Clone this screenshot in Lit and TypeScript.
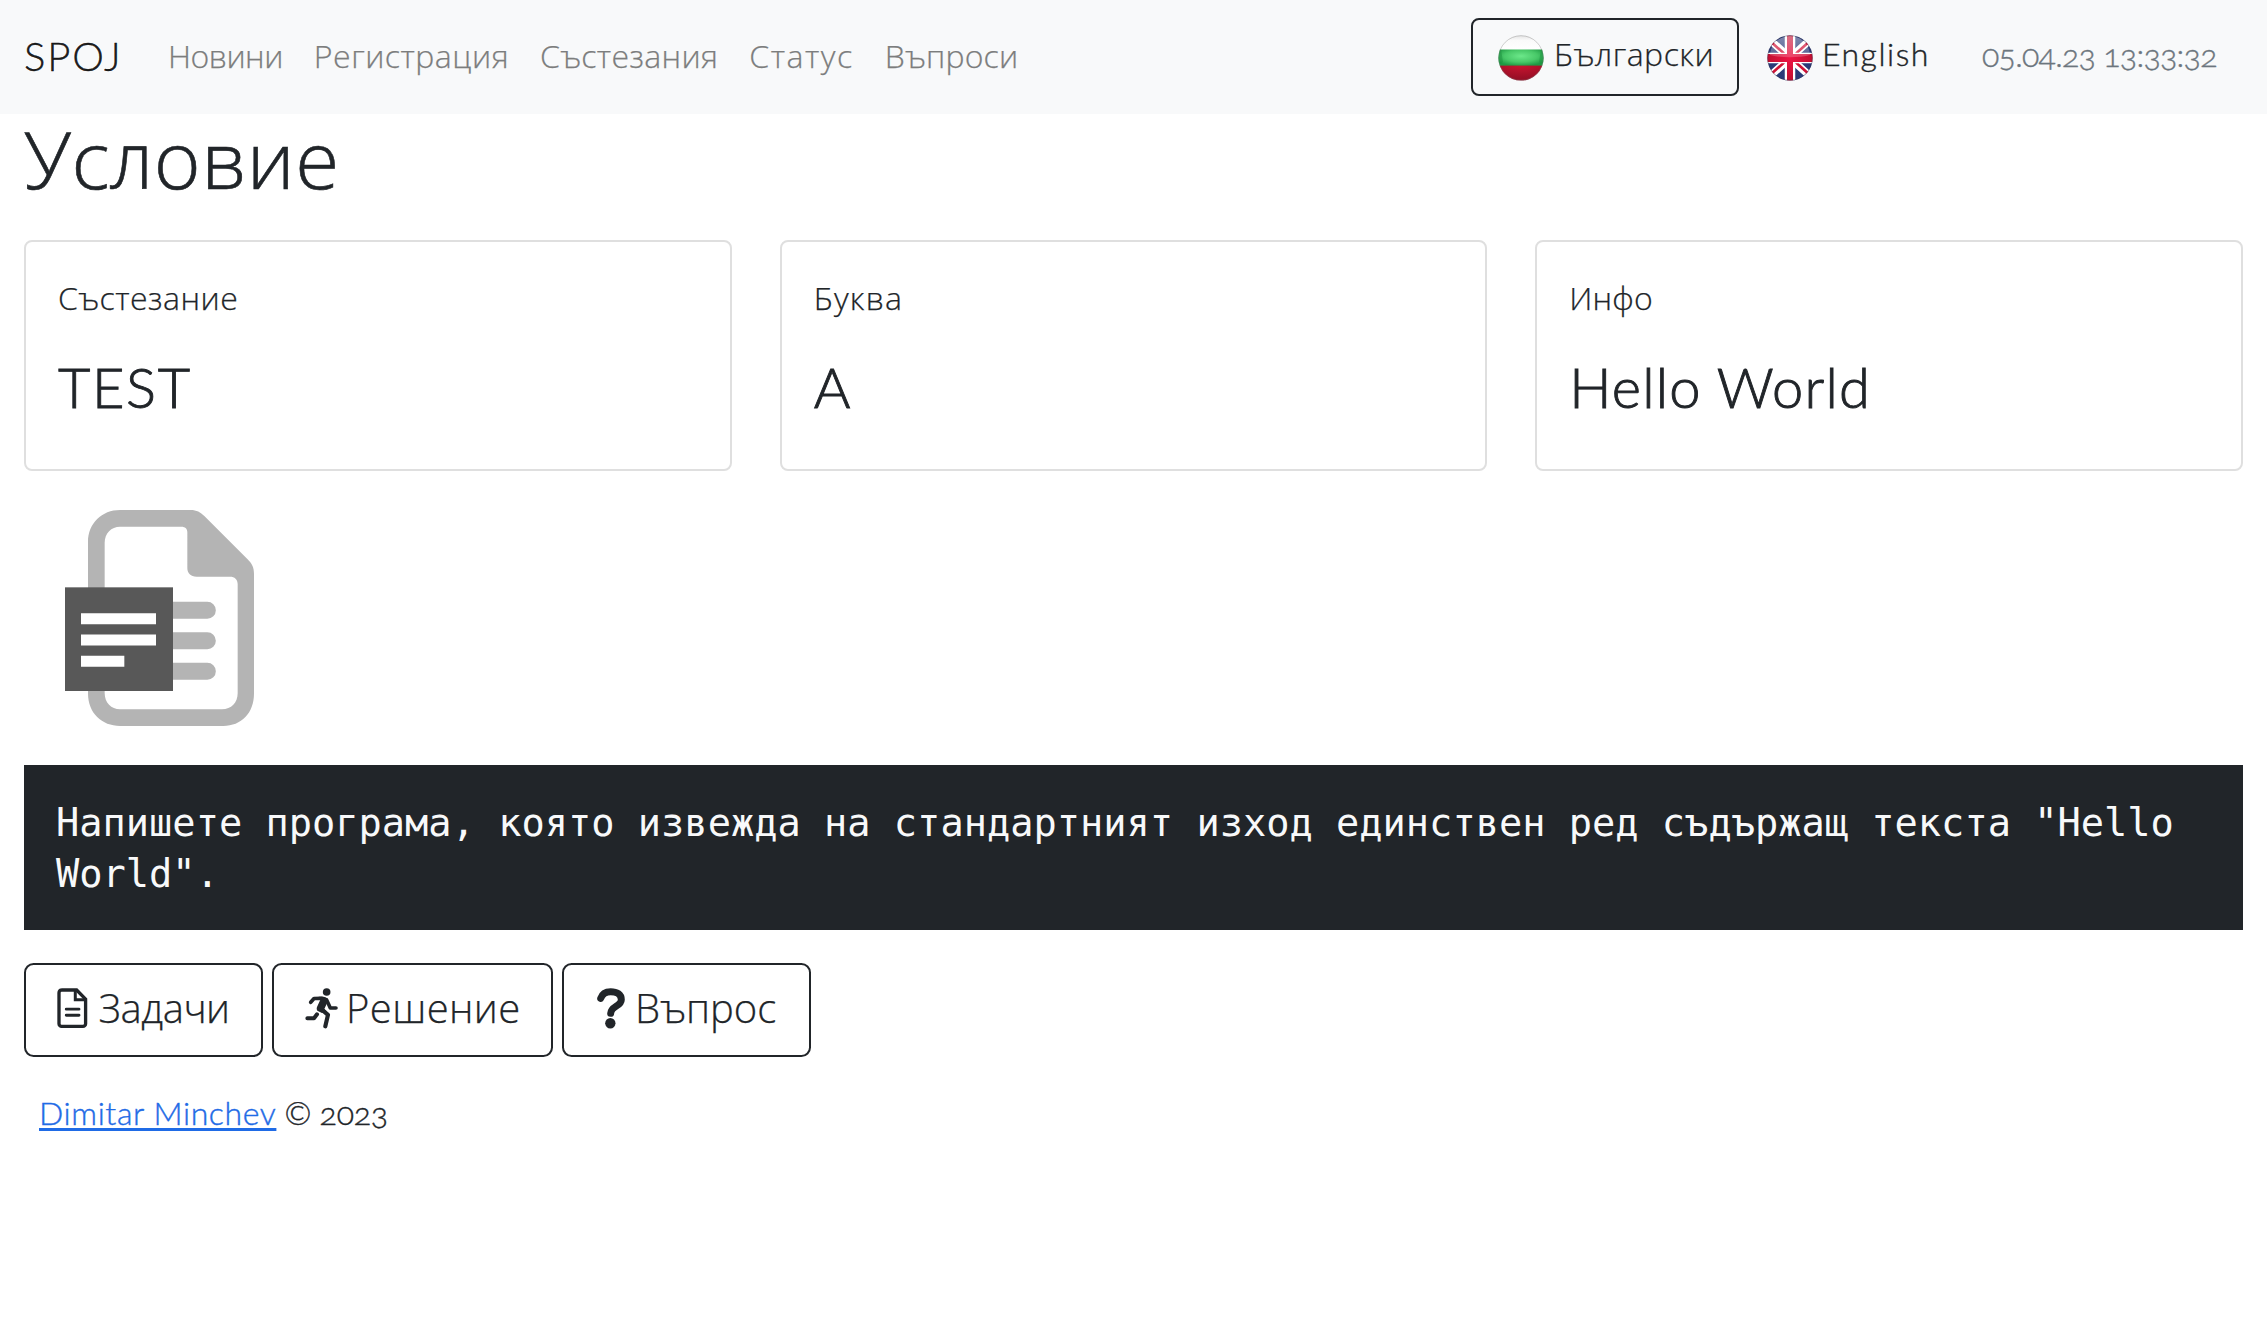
import { LitElement, html, css } from "lit";
import { customElement } from "lit/decorators.js";

const bulgarianFlag = html`<svg class="flag" viewBox="0 0 46 46" aria-hidden="true">
  <defs>
    <clipPath id="bgClip"><circle cx="23" cy="23" r="22.6" /></clipPath>
    <radialGradient id="bgGreen" cx="50%" cy="40%" r="60%">
      <stop offset="0" stop-color="#6ce88a" /><stop offset=".6" stop-color="#48c868" /><stop offset="1" stop-color="#1f9a44" />
    </radialGradient>
    <radialGradient id="bgRed" cx="50%" cy="0%" r="80%">
      <stop offset="0" stop-color="#c8142f" /><stop offset="1" stop-color="#980f26" />
    </radialGradient>
    <linearGradient id="bgWhite" x1="0" y1="0" x2="0" y2="1">
      <stop offset="0" stop-color="#e2e2e2" /><stop offset=".35" stop-color="#fafafa" /><stop offset="1" stop-color="#ffffff" />
    </linearGradient>
  </defs>
  <g clip-path="url(#bgClip)">
    <rect width="46" height="15" fill="url(#bgWhite)" />
    <rect y="14.500" width="46" height="16.500" fill="url(#bgGreen)" />
    <path d="M0 14.500h3C4 19 4 22 5 27L0 31z M46 14.500h-3c-1 4.500-1 7.500-2 12.500l5 4z" fill="#1c8f3e" opacity=".45" />
    <rect y="30.600" width="46" height="16" fill="url(#bgRed)" />
  </g>
  <circle cx="23" cy="23" r="22.300" fill="none" stroke="#777" stroke-opacity=".35" stroke-width="1" />
</svg>`;

const britishFlag = html`<svg class="flag" viewBox="0 0 46 46" aria-hidden="true">
  <defs>
    <clipPath id="ukClip"><circle cx="23" cy="23" r="22.6" /></clipPath>
    <linearGradient id="ukGloss" x1="0" y1="0" x2="0" y2="1">
      <stop offset="0" stop-color="#fff" stop-opacity=".4" /><stop offset="1" stop-color="#fff" stop-opacity=".2" />
    </linearGradient>
    <radialGradient id="ukRed" gradientUnits="userSpaceOnUse" cx="23" cy="23" r="23">
      <stop offset="0" stop-color="#ee1445" /><stop offset="1" stop-color="#c00f30" />
    </radialGradient>
  </defs>
  <g clip-path="url(#ukClip)">
    <rect width="46" height="46" fill="#2a3a78" />
    <path d="M2 4L44 42M44 4L2 42" stroke="#fff" stroke-width="7.500" />
    <path d="M2 5L22 23M44 41L24 23M44 5L24 23M2 41L22 23" stroke="#d01236" stroke-width="2.600" />
    <path d="M23 0v46M0 23h46" stroke="#fff" stroke-width="10.500" />
    <path d="M23 0v46" stroke="url(#ukRed)" stroke-width="6" />
    <rect y="19" width="46" height="8" fill="url(#ukRed)" />
    <path d="M3 20C4 7 14 1 23 1s19 6 20 19c-10 3-30 3-40 0z" fill="url(#ukGloss)" />
  </g>
  <circle cx="23" cy="23" r="22.300" fill="none" stroke="#334" stroke-opacity=".35" stroke-width="1" />
</svg>`;

const documentIcon = html`<svg class="icon doc" viewBox="51 53 92 121" aria-hidden="true">
  <path d="M64 58.500H110L137 86V160a8 8 0 0 1-8 8H65a8 8 0 0 1-8-8V66.500a8 8 0 0 1 8-8z" fill="none" stroke="#212529" stroke-width="10" />
  <path d="M106 60V88H136" fill="none" stroke="#212529" stroke-width="9" />
  <path d="M79 116H117M79 134.500H117" stroke="#212529" stroke-width="9" stroke-linecap="round" />
</svg>`;

const runnerIcon = html`<svg class="icon run" viewBox="43 38 99 122" aria-hidden="true">
  <circle cx="108" cy="50" r="11.500" fill="#212529" />
  <g fill="none" stroke="#212529" stroke-linecap="round" stroke-linejoin="round">
    <path d="M60 81L70 69.500L94 69" stroke-width="11" />
    <path d="M108 74L119 98H136" stroke-width="11" />
    <path d="M91 101L112 118.500L104 153" stroke-width="12.500" />
    <path d="M50 129H70L79 117" stroke-width="12" />
  </g>
  <path d="M84 64H98C108 65 114 72 111 79L101 101L108 108L94 113L80 106C77 102 78 97 80 93L89 73z" fill="#212529" />
</svg>`;

const questionIcon = html`<svg class="icon ask" viewBox="921 38 84 122" aria-hidden="true">
  <path d="M932 69C937 54 948 49 962 49C981 49 994 57 994 73C994 93 963 92 962 114" fill="none" stroke="#212529" stroke-width="21" stroke-linecap="round" />
  <circle cx="961" cy="144" r="15.500" fill="#212529" />
</svg>`;

const statementIcon = html`<svg class="statement-icon" viewBox="0 -27 840 882" role="img">
  <path fill="#b4b4b4" fill-rule="evenodd" d="M300 90H512C530 90 541 97 553 108L682 237C696 251 702 262 702 282V640C702 700 664 738 610 738H300C246 738 204 700 204 640V186C204 130 246 90 300 90zM300 140C274 140 254 160 254 188V640C254 668 274 688 300 688H606C634 688 653 668 653 640V312C653 298 644 290 630 290H530C512 290 502 280 502 264V158C502 146 496 140 484 140z" />
  <path d="M440 390.500H562M440 482H562M440 573.500H562" stroke="#b4b4b4" stroke-width="51" stroke-linecap="round" />
  <rect x="135" y="322" width="324" height="311" fill="#585858" />
  <path fill="#fff" d="M183 400h225v33H183zM183 463.500h225v33H183zM183 527.500h130v32.500H183z" />
</svg>`;

@customElement("app-root")
export class AppRoot extends LitElement {
  static styles = css`
    :host {
      display: block;
      min-height: 1321px;
      background: #fff;
      color: #212529;
      font-family: "Open Sans", sans-serif;
      font-size: 32px;
      font-weight: 300;
      line-height: 48px;
      white-space: nowrap;
      -webkit-text-stroke: 0.25px currentColor;
    }
    * { box-sizing: border-box; }
    a { color: inherit; text-decoration: none; }
    svg { display: block; flex: none; overflow: visible; }
    .latin { font-family: Lato, sans-serif; -webkit-text-stroke: 0.4px currentColor; }
    .navbar { display: flex; align-items: center; height: 114px; padding: 0 49px 0 24px; background: #f8f9fa; }
    .brand { font-size: 40px; letter-spacing: 1.9px; margin-right: 45.4px; padding-bottom: 2px; color: rgba(0, 0, 0, 0.9); }
    .links { display: flex; gap: 31px; padding-bottom: 3px; color: #7c7d7d; }
    .novini { letter-spacing: -0.5px; }
    .registracia { letter-spacing: 0.5px; }
    .sastezania { letter-spacing: 0.35px; }
    .status { letter-spacing: 1.55px; }
    .vaprosi { letter-spacing: 0.2px; }
    .tools { display: flex; align-items: center; margin-left: auto; }
    .lang { display: flex; align-items: center; height: 78px; padding: 0 25px; border: 2px solid transparent; border-radius: 8px; }
    .lang span { padding: 0 0 7px 10px; letter-spacing: 0.5px; }
    .lang span.latin { padding-left: 9px; letter-spacing: 1.5px; }
    .lang.current { width: 268px; border-color: #212529; }
    .lang.other { width: 242px; margin-left: 1px; }
    .flag { width: 46px; height: 46px; margin-top: 2px; }
    .clock { width: 236px; padding-bottom: 5px; color: #6c757d; letter-spacing: -0.68px; }
    .clock, .copy { font-feature-settings: "onum"; }
    main { display: flex; flex-direction: column; padding: 0 24px; }
    h1 { margin: 0 0 39px; padding-top: 1px; font-size: 80px; font-weight: 300; line-height: 86px; letter-spacing: 0.4px; -webkit-text-stroke: 0.6px currentColor; }
    .cards { display: grid; grid-template-columns: repeat(3, 1fr); gap: 48px; }
    .card { height: 231px; padding: 32px 32px 0; border: 2px solid #dfdfdf; border-radius: 8px; }
    .card h2 { margin: 31px 0 0; font-size: 56px; font-weight: 300; line-height: 68px; -webkit-text-stroke-width: 0.9px; }
    .l1 { letter-spacing: 0.5px; }
    .l2 { letter-spacing: 1.2px; }
    .l3 { letter-spacing: 0.2px; }
    .v1 { letter-spacing: 1.6px; }
    .v3 { letter-spacing: 1.15px; }
    .statement-icon { width: 280px; height: 294px; margin-left: -4px; }
    pre {
      height: 165px; margin: 0; padding: 33px 32px 0; background: #212529; color: #f8f9fa;
      font: 400 38.66px/50.6px "DejaVu Sans Mono", monospace; white-space: pre-wrap; -webkit-text-stroke: 0;
    }
    .actions { display: flex; gap: 9px; margin-top: 32.5px; }
    .btn { display: flex; align-items: center; height: 94px; padding-left: 31px; border: 2px solid #212529; border-radius: 9.6px; font-size: 40px; }
    .btn span { padding-bottom: 3px; }
    .btn svg { margin-bottom: 2px; }
    .b1 { width: 239px; letter-spacing: -0.45px; }
    .b2 { width: 281px; letter-spacing: 0.4px; }
    .b3 { width: 249px; padding-left: 33px; }
    .icon { height: 40.6px; }
    .doc { width: 30.6px; margin-right: 11px; }
    .run { width: 33px; margin-right: 8px; }
    .ask { width: 28px; margin-right: 10px; }
    footer { display: flex; align-items: baseline; margin-top: 32px; padding-left: 15px; }
    .author { color: #1f6be6; letter-spacing: 0.6px; text-decoration: underline; text-decoration-thickness: 2.5px; text-underline-offset: 3px; text-decoration-skip-ink: none; }
    .copy { margin-left: 8px; letter-spacing: -0.2px; }
  `;

  private card(n: number, label: string, value: string) {
    return html`<section class="card"><div class="l${n}">${label}</div><h2 class="latin v${n}">${value}</h2></section>`;
  }

  render() {
    return html`
      <nav class="navbar">
        <a class="brand latin">SPOJ</a>
        <div class="links">
          <a class="novini">Новини</a>
          <a class="registracia">Регистрация</a>
          <a class="sastezania">Състезания</a>
          <a class="status">Статус</a>
          <a class="vaprosi">Въпроси</a>
        </div>
        <div class="tools">
          <a class="lang current">${bulgarianFlag}<span>Български</span></a>
          <a class="lang other">${britishFlag}<span class="latin">English</span></a>
          <div class="clock latin">05.04.23 13:33:32</div>
        </div>
      </nav>
      <main>
        <h1>Условие</h1>
        <div class="cards">
          ${this.card(1, "Състезание", "TEST")}
          ${this.card(2, "Буква", "A")}
          ${this.card(3, "Инфо", "Hello World")}
        </div>
        ${statementIcon}
        <pre>Напишете програма, която извежда на стандартният изход единствен ред съдържащ текста "Hello World".</pre>
        <div class="actions">
          <a class="btn b1">${documentIcon}<span>Задачи</span></a>
          <a class="btn b2">${runnerIcon}<span>Решение</span></a>
          <a class="btn b3">${questionIcon}<span>Въпрос</span></a>
        </div>
        <footer><a class="author latin">Dimitar Minchev</a><span class="copy latin">© 2023</span></footer>
      </main>
    `;
  }
}
